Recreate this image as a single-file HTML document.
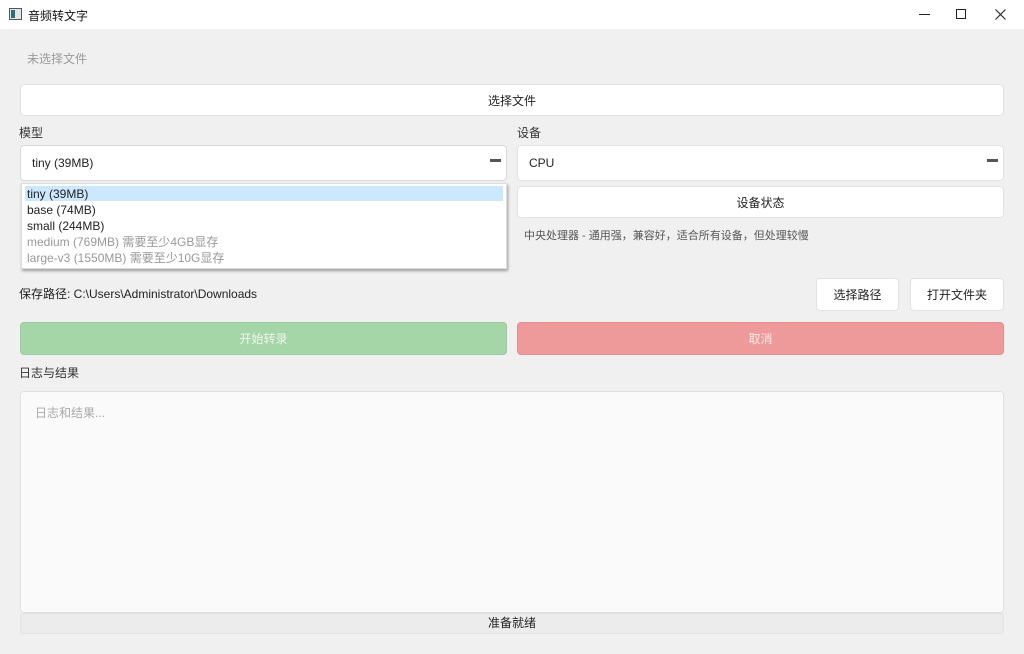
<!DOCTYPE html>
<html><head><meta charset="utf-8"><style>
*{box-sizing:border-box;margin:0;padding:0}
body{width:1024px;height:654px;overflow:hidden;background:#f0f0f0;font-family:"Liberation Sans","Noto Sans CJK SC",sans-serif;font-size:12px;color:#222;position:relative}
.a{position:absolute}
.btn{position:absolute;background:#fff;border:1px solid #e2e2e2;border-radius:4px;display:flex;align-items:center;justify-content:center;font-size:12px;color:#222}
.lbl{position:absolute;font-size:12px;color:#333;line-height:14px}
.dash{position:absolute;width:11px;height:3px;background:#555;right:5px;top:13px}
</style></head><body>
<div class="a" style="left:0;top:0;width:1024px;height:29px;background:#fff"></div>
<div class="a" style="left:9px;top:8px;width:13px;height:12px;border:1px solid #555;background:#dfe8e8"><div class="a" style="left:1px;top:1px;width:4px;height:8px;background:#2f6f6f"></div></div>
<div class="a" style="left:28px;top:7px;font-size:12px;color:#111">音频转文字</div>
<div class="a" style="left:919px;top:14px;width:11px;height:1px;background:#222"></div>
<div class="a" style="left:956px;top:9px;width:10px;height:10px;border:1px solid #222"></div>
<svg class="a" style="left:995px;top:9px" width="11" height="11" viewBox="0 0 11 11"><path d="M0.5 0.5L10.5 10.5M10.5 0.5L0.5 10.5" stroke="#222" stroke-width="1.1"/></svg>

<div class="lbl" style="left:27px;top:52px;color:#999">未选择文件</div>
<div class="btn" style="left:20px;top:84px;width:984px;height:32px">选择文件</div>

<div class="lbl" style="left:19px;top:126px">模型</div>
<div class="lbl" style="left:517px;top:126px">设备</div>
<div class="btn" style="left:20px;top:145px;width:487px;height:36px;justify-content:flex-start;padding-left:11px;border-color:#d8d8d8">tiny (39MB)<div class="dash"></div></div>
<div class="btn" style="left:517px;top:145px;width:487px;height:36px;justify-content:flex-start;padding-left:11px">CPU<div class="dash"></div></div>

<div class="btn" style="left:517px;top:186px;width:487px;height:32px">设备状态</div>
<div class="lbl" style="left:524px;top:229px;font-size:11px;color:#555">中央处理器 - 通用强，兼容好，适合所有设备，但处理较慢</div>

<div class="a" style="left:21px;top:183px;width:486px;height:86px;background:#fff;box-shadow:1px 2px 3px rgba(0,0,0,.35);border:1px solid #ddd">
<div class="a" style="left:3px;top:2px;width:478px;height:15px;background:#cce8ff"></div>
<div class="a" style="left:5px;top:2px;line-height:16px;font-size:12px;color:#222">tiny (39MB)<br>base (74MB)<br>small (244MB)<br><span style="color:#999">medium (769MB) 需要至少4GB显存<br>large-v3 (1550MB) 需要至少10G显存</span></div>
</div>

<div class="lbl" style="left:19px;top:287px;color:#222">保存路径: C:\Users\Administrator\Downloads</div>
<div class="btn" style="left:816px;top:278px;width:83px;height:33px">选择路径</div>
<div class="btn" style="left:910px;top:278px;width:94px;height:33px">打开文件夹</div>

<div class="btn" style="left:20px;top:322px;width:487px;height:33px;background:#a5d6a7;border-color:#9cc99e;color:#eef7ee">开始转录</div>
<div class="btn" style="left:517px;top:322px;width:487px;height:33px;background:#ef9a9a;border-color:#e39090;color:#fbeaea">取消</div>

<div class="lbl" style="left:19px;top:366px">日志与结果</div>
<div class="a" style="left:20px;top:391px;width:984px;height:222px;background:#fafafa;border:1px solid #e0e0e0;border-radius:4px"></div>
<div class="lbl" style="left:35px;top:406px;color:#aaa">日志和结果...</div>
<div class="a" style="left:20px;top:613px;width:984px;height:21px;background:#ececec;border:1px solid #e2e2e2;border-radius:3px;text-align:center;line-height:19px;font-size:12px;color:#222">准备就绪</div>
</body></html>
